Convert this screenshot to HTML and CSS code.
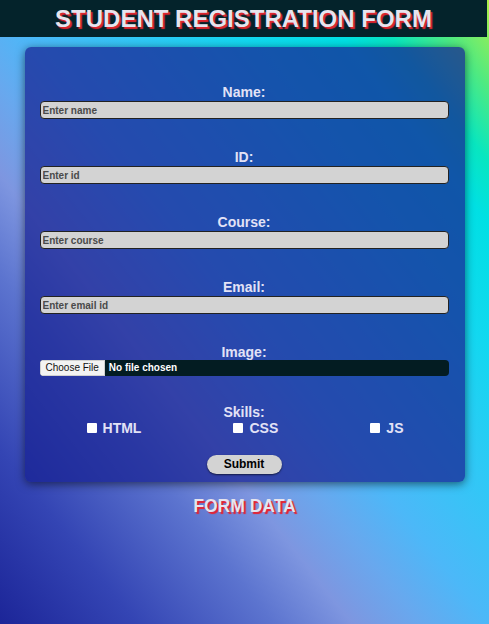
FILE: index.html
```html
<!DOCTYPE html>
<html lang="en">
<head>
<meta charset="utf-8">
<title>Student Registration Form</title>
<link rel="stylesheet" href="styles.css">
</head>
<body>
<header class="topbar">
  <h1 class="title">STUDENT REGISTRATION FORM</h1>
</header>
<main class="page">
  <form class="card">
    <div class="field">
      <label class="field-label" for="name">Name:</label>
      <input class="text-input" id="name" type="text" placeholder="Enter name">
    </div>
    <div class="field">
      <label class="field-label" for="sid">ID:</label>
      <input class="text-input" id="sid" type="text" placeholder="Enter id">
    </div>
    <div class="field">
      <label class="field-label" for="course">Course:</label>
      <input class="text-input" id="course" type="text" placeholder="Enter course">
    </div>
    <div class="field">
      <label class="field-label" for="email">Email:</label>
      <input class="text-input" id="email" type="text" placeholder="Enter email id">
    </div>
    <div class="field field-image">
      <label class="field-label field-label-tight" for="image">Image:</label>
      <input class="file-input" id="image" type="file">
    </div>
    <div class="field field-skills">
      <span class="field-label field-label-tight">Skills:</span>
      <div class="skill-row">
        <label class="skill"><input class="check" type="checkbox">HTML</label>
        <label class="skill"><input class="check" type="checkbox">CSS</label>
        <label class="skill"><input class="check" type="checkbox">JS</label>
      </div>
    </div>
    <button class="submit" type="button">Submit</button>
  </form>
  <h2 class="form-data">FORM DATA</h2>
</main>
</body>
</html>
```
FILE: styles.css
```css
html {
  min-height: 100%;
  background: linear-gradient(to top right,
    #1c2598 0%,
    #3445b4 14%,
    #5c74cf 28%,
    #7e96e0 36%,
    #68a8ee 43%,
    #4cb8f8 50%,
    #30c8f6 61%,
    #12d8f0 72%,
    #00e0e4 82%,
    #08e6c0 87%,
    #50ea80 93%,
    #b0f048 100%);
}

body {
  margin: 0;
  font-family: "Liberation Sans", Arial, sans-serif;
  font-weight: bold;
}

.topbar {
  width: calc(100% - 2px);
  background: #04232b;
  padding: 5px 0;
}

.title {
  margin: 0;
  font-size: 24px;
  line-height: 27px;
  text-align: center;
  color: #e6e4ee;
  text-shadow: 2px 2px 1px #e3262e;
}

.page {
  display: flex;
  flex-direction: column;
  align-items: center;
}

.card {
  box-sizing: border-box;
  width: 440px;
  margin-top: 10px;
  padding: 37px 16px 8px 15px;
  border-radius: 6px;
  background: rgba(22, 32, 146, 0.72);
  box-shadow: 0 2px 10px rgba(0, 0, 0, 0.55);
  display: flex;
  flex-direction: column;
}

.field {
  display: flex;
  flex-direction: column;
  margin-bottom: 30px;
}

.field-image {
  margin-bottom: 28px;
}

.field-skills {
  margin-bottom: 0;
}

.field-label {
  display: block;
  text-align: center;
  font-size: 14px;
  line-height: normal;
  color: #e2e2f6;
  margin-bottom: 1px;
}

.field-label-tight {
  margin-bottom: 0;
}

.text-input {
  box-sizing: border-box;
  width: 100%;
  height: 18px;
  margin: 0;
  padding: 0 2px;
  border: 1px solid #222;
  border-radius: 4px;
  background: #d3d3d3;
  font-family: "Liberation Sans", Arial, sans-serif;
  font-weight: bold;
  font-size: 10px;
  color: #222;
  outline: none;
}

.text-input::placeholder {
  color: #4a4a4a;
  opacity: 1;
}

.file-input {
  box-sizing: border-box;
  width: 100%;
  height: 15.5px;
  margin: 0;
  padding: 0;
  border: none;
  border-radius: 4px;
  background: #031c22;
  color: #fff;
  font-family: "Liberation Sans", Arial, sans-serif;
  font-weight: bold;
  font-size: 10px;
  overflow: hidden;
}

.file-input::file-selector-button {
  height: 100%;
  margin: 0 4px 0 0;
  padding: 0 5px;
  border: 1px solid #d0d0d0;
  border-radius: 0;
  background: #f3f3f3;
  color: #111;
  font-family: "Liberation Sans", Arial, sans-serif;
  font-weight: normal;
  font-size: 10px;
}

.skill-row {
  display: flex;
  justify-content: space-around;
}

.skill {
  display: flex;
  align-items: center;
  font-size: 14px;
  line-height: normal;
  color: #e2e2f6;
}

.check {
  appearance: none;
  -webkit-appearance: none;
  width: 10px;
  height: 10px;
  margin: 0 6px 0 2px;
  background: #fff;
  border: none;
  border-radius: 1px;
}

.submit {
  display: block;
  width: 75px;
  height: 19px;
  margin: 19px auto 0;
  padding: 0;
  border: none;
  border-radius: 10px;
  background: #d3d3d3;
  box-shadow: 0 1px 2px rgba(0, 0, 0, 0.6);
  font-family: "Liberation Sans", Arial, sans-serif;
  font-weight: bold;
  font-size: 12px;
  color: #000;
}

.form-data {
  margin: 14px 0 0;
  font-size: 17.5px;
  line-height: normal;
  color: #e6e4ee;
  text-shadow: 2px 2px 1px #e8202e;
}
```
